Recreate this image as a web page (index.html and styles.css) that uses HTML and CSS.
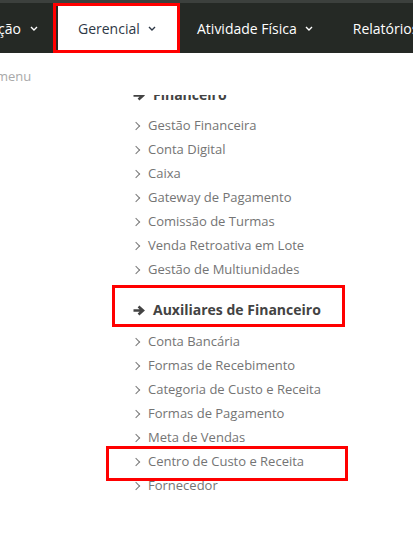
FILE: index.html
```html
<!DOCTYPE html>
<html lang="pt-BR">
<head>
    <meta charset="UTF-8">
    <meta name="viewport" content="width=device-width, initial-scale=1.0">
    <title>Gerencial</title>
    <link rel="stylesheet" href="styles.css">
</head>
<body>
    <div id="page">
        <!-- Top navigation -->
        <nav class="topNav">
            <div class="navItem cutItem">
                <span class="navInner">Configuração
                    <svg class="navCaret" width="8" height="5" viewBox="0 0 8 5"><path d="M1 1l3 3 3-3" fill="none" stroke="currentColor" stroke-width="1.4"/></svg>
                </span>
            </div>
            <div class="navItem active">
                Gerencial
                <svg class="navCaret" width="8" height="5" viewBox="0 0 8 5"><path d="M1 1l3 3 3-3" fill="none" stroke="currentColor" stroke-width="1.4"/></svg>
            </div>
            <div class="navItem">
                Atividade Física
                <svg class="navCaret" width="8" height="5" viewBox="0 0 8 5"><path d="M1 1l3 3 3-3" fill="none" stroke="currentColor" stroke-width="1.4"/></svg>
            </div>
            <div class="navItem">Relatórios</div>
        </nav>

        <div class="searchHint">menu</div>

        <!-- Dropdown content -->
        <div class="dropClip">
            <div class="dropList">
                <h4 class="groupTitle">
                    <svg class="groupArrow" width="12" height="11" viewBox="0 0 12 11"><path d="M0.5 5.5h8.5M5.5 1.5l4.5 4-4.5 4" fill="none" stroke="currentColor" stroke-width="2.6"/></svg>
                    Financeiro
                </h4>
                <ul class="linkList">
                    <li>Gestão Financeira</li>
                    <li>Conta Digital</li>
                    <li>Caixa</li>
                    <li>Gateway de Pagamento</li>
                    <li>Comissão de Turmas</li>
                    <li>Venda Retroativa em Lote</li>
                    <li>Gestão de Multiunidades</li>
                </ul>
                <h4 class="groupTitle second">
                    <svg class="groupArrow" width="12" height="11" viewBox="0 0 12 11"><path d="M0.5 5.5h8.5M5.5 1.5l4.5 4-4.5 4" fill="none" stroke="currentColor" stroke-width="2.6"/></svg>
                    Auxiliares de Financeiro
                </h4>
                <ul class="linkList">
                    <li>Conta Bancária</li>
                    <li>Formas de Recebimento</li>
                    <li>Categoria de Custo e Receita</li>
                    <li>Formas de Pagamento</li>
                    <li>Meta de Vendas</li>
                    <li>Centro de Custo e Receita</li>
                    <li>Fornecedor</li>
                </ul>
            </div>
        </div>

        <!-- Highlight marks -->
        <div class="mark markNav"></div>
        <div class="mark markGroup"></div>
        <div class="mark markItem"></div>
    </div>
</body>
</html>
```

FILE: styles.css
```css
* {
    box-sizing: border-box;
}
html, body {
    margin: 0;
    padding: 0;
    background: #fff;
    overflow: hidden;
}
body {
    font-family: "Open Sans", Arial, sans-serif;
}

#page {
    position: relative;
    width: 413px;
    height: 534px;
    overflow: hidden;
}

/* Top navigation */
.topNav {
    display: flex;
    height: 53px;
    border-top: 3px solid #3c403d;
    background-color: #252925;
    white-space: nowrap;
}
.navItem {
    display: flex;
    align-items: center;
    gap: 8px;
    padding: 0 20px;
    color: #fff;
    font-size: 14px;
    flex-shrink: 0;
}
.navCaret {
    margin-top: 1px;
}
.cutItem {
    width: 58px;
    padding-left: 0;
    overflow: hidden;
    justify-content: flex-end;
}
.navInner {
    display: flex;
    align-items: center;
    gap: 9px;
}
.navItem.active {
    background-color: #fff;
    color: #2e3846;
    width: 119px;
}

.searchHint {
    margin: 13px 0 0 -4px;
    line-height: 20px;
    font-size: 13px;
    color: #a9a9a9;
}

/* Dropdown */
.dropClip {
    margin: 9px 0 0 132px;
    height: 420px;
    overflow: hidden;
}
.dropList {
    margin-top: -12px;
}
.groupTitle {
    display: flex;
    align-items: center;
    gap: 8px;
    margin: 0 0 6px;
    line-height: 24px;
    font-size: 14px;
    font-weight: 700;
    color: #434343;
}
.groupTitle.second {
    margin-top: 17px;
    margin-bottom: 7px;
}
.groupArrow {
    margin-left: 1px;
}
.linkList {
    list-style: none;
    margin: 0;
    padding: 0;
}
.linkList li {
    position: relative;
    padding-left: 16px;
    line-height: 24px;
    font-size: 13px;
    color: #747474;
}
.linkList li::before {
    content: "";
    position: absolute;
    left: 1px;
    top: 10px;
    width: 5px;
    height: 5px;
    border-right: 1.3px solid #7a7a7a;
    border-top: 1.3px solid #7a7a7a;
    transform: rotate(45deg);
}

/* Red highlight marks */
.mark {
    position: absolute;
    border: 3px solid #f00;
}
.markNav {
    left: 53px;
    top: 3px;
    width: 127px;
    height: 50px;
}
.markGroup {
    left: 112px;
    top: 285px;
    width: 233px;
    height: 42px;
}
.markItem {
    left: 106px;
    top: 446px;
    width: 242px;
    height: 35px;
}
```
